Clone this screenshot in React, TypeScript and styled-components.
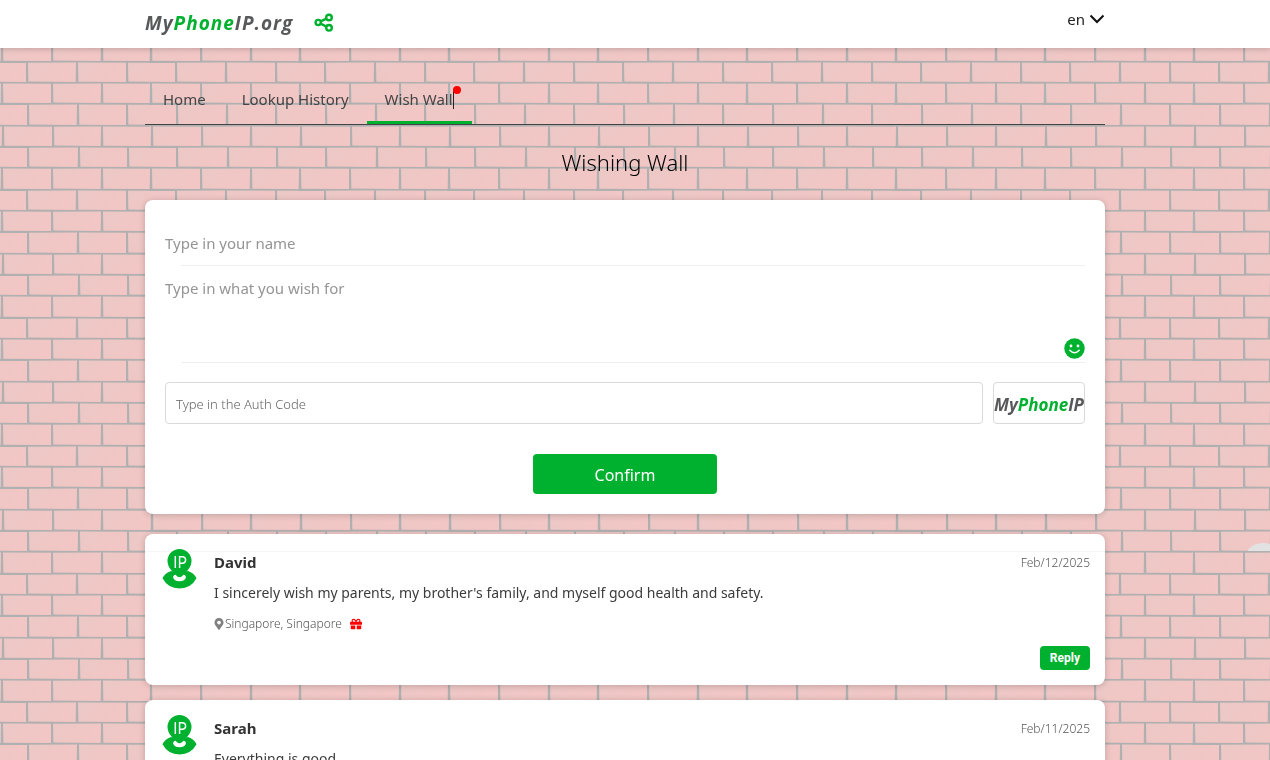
import React from 'react';
import styled, { createGlobalStyle } from 'styled-components';
import { FaGift, FaMapMarkerAlt } from 'react-icons/fa';

const green = '#00b02f';

const GlobalStyle = createGlobalStyle`
  * { box-sizing: border-box; }
  body {
    margin: 0;
    font-family: "Noto Sans", "Open Sans", sans-serif;
    color: #000;
  }
  #root { height: 100vh; overflow-y: auto; scrollbar-width: none; }
  button, input, textarea { font-family: inherit; font-weight: inherit; }
  input::placeholder, textarea::placeholder { color: #959595; opacity: 1; }
`;

const Backdrop = styled.svg`
  position: fixed;
  inset: 0;
  width: 100%;
  height: 100%;
  z-index: -1;
`;

const Header = styled.header`
  height: 48px;
  background: #fff;
  box-shadow: 0 1px 6px rgba(0, 0, 0, 0.2);
`;

const Container = styled.div`
  width: 100%;
  max-width: 960px;
  margin: 0 auto;
`;

const Shell = styled.div`
  padding-right: 20px;
`;

const HeaderBar = styled(Container)`
  display: flex;
  align-items: center;
  height: 46px;
`;

const Logo = styled.a`
  font-family: "Open Sans", "Noto Sans", sans-serif;
  font-size: 19px;
  line-height: 28px;
  font-weight: 700;
  font-style: italic;
  letter-spacing: 1px;
  color: #58595b;
  text-decoration: none;
  em { color: ${green}; }
`;

const IconButton = styled.button`
  display: flex;
  padding: 0;
  border: 0;
  background: none;
  color: ${green};
  cursor: pointer;
`;

const ShareButton = styled(IconButton)`
  margin-left: 21px;
`;

const LanguageButton = styled.button`
  display: flex;
  align-items: center;
  gap: 4px;
  margin-left: auto;
  padding: 0 0 8px;
  border: 0;
  background: none;
  font-size: 15px;
  line-height: 20px;
  color: #222;
`;

const Tabs = styled.nav`
  display: flex;
  margin-top: 28px;
  border-bottom: 1px solid #444;
`;

const Tab = styled.a<{ $active?: boolean }>`
  height: 48px;
  padding: 11px 18px 0;
  font-size: 15px;
  line-height: 24px;
  color: #444;
  text-decoration: none;
  border-bottom: 3px solid ${(p) => (p.$active ? green : 'transparent')};
`;

const TabLabel = styled.span`
  position: relative;
  border-right: 1px solid #222;
`;

const Dot = styled.i`
  position: absolute;
  top: -3px;
  right: -8px;
  width: 8px;
  height: 8px;
  border-radius: 50%;
  background: #f00;
`;

const Title = styled.h1`
  margin: 21px 0 22px;
  font-size: 22px;
  line-height: 32px;
  font-weight: 300;
  text-align: center;
`;

const Card = styled.section`
  background: #fff;
  border-radius: 8px;
  box-shadow: 0 1px 6px rgba(0, 0, 0, 0.2);
`;

const WishForm = styled.form`
  display: flex;
  flex-direction: column;
  padding: 24px 20px 20px;
`;

const Field = styled.label`
  display: flex;
  align-items: flex-end;
`;

const NameInput = styled.input`
  flex: 1;
  height: 41px;
  padding: 0 0 4px;
  border: 0;
  outline: 0;
  font-size: 15px;
`;

const WishInput = styled.textarea`
  flex: 1;
  height: 86px;
  padding: 0;
  border: 0;
  outline: 0;
  resize: none;
  font-size: 15px;
  line-height: 24px;
`;

const Divider = styled.hr`
  width: calc(100% - 16px);
  height: 1px;
  margin: 0 0 10px auto;
  border: 0;
  background: #eee;
`;

const SmileButton = styled(IconButton)`
  margin-bottom: 3px;
`;

const AuthRow = styled.div`
  display: flex;
  gap: 10px;
  margin: 9px 0 30px;
`;

const AuthInput = styled.input`
  flex: 1;
  height: 42px;
  padding: 2px 10px 0;
  border: 1px solid #d9d9d9;
  border-radius: 4px;
  outline: 0;
  font-size: 13px;
  font-weight: 300;
  &::placeholder { color: #666; }
`;

const Captcha = styled.div`
  display: flex;
  align-items: center;
  justify-content: center;
  width: 92px;
  height: 42px;
  padding-top: 2px;
  border: 1px solid #d9d9d9;
  border-radius: 4px;
  font-family: "Open Sans", "Noto Sans", sans-serif;
  font-size: 17px;
  font-weight: 700;
  font-style: italic;
  color: #58595b;
  em { color: ${green}; }
`;

const ConfirmButton = styled.button`
  align-self: center;
  width: 184px;
  height: 40px;
  padding: 2px 0 0;
  border: 0;
  border-radius: 4px;
  background: ${green};
  color: #fff;
  font-size: 16px;
`;

const Wishes = styled.div`
  display: grid;
  gap: 15px;
  margin: 20px 0;
`;

const WishCard = styled(Card)<{ $seam?: boolean }>`
  display: grid;
  grid-template-columns: 35px 1fr;
  column-gap: 17px;
  padding: 14px 15px 15px 17px;
  ${(p) => p.$seam && 'background: linear-gradient(#f5f5f5, #f5f5f5) 0 17px / 100% 1px no-repeat #fff;'}
`;

const WishBody = styled.div`
  display: flex;
  flex-direction: column;
`;

const WishHead = styled.div`
  display: flex;
  justify-content: space-between;
  align-items: center;
`;

const Author = styled.h2`
  margin: 0;
  font-size: 15px;
  line-height: 28px;
  font-weight: 700;
  color: #333;
`;

const Stamp = styled.time`
  font-size: 12px;
  font-weight: 300;
  color: #555;
`;

const Message = styled.p`
  margin: 5px 0;
  font-size: 14px;
  line-height: 24px;
  color: #3c3c3c;
`;

const Place = styled.div`
  display: flex;
  align-items: center;
  font-size: 12px;
  line-height: 28px;
  font-weight: 300;
  color: #555;
  svg { margin-left: -1px; color: #808080; }
  svg:last-child { margin-left: 8px; color: #f00; }
`;

const ReplyButton = styled.button`
  align-self: flex-end;
  height: 24px;
  margin-top: 8px;
  padding: 0 10px;
  border: 0;
  border-radius: 4px;
  background: ${green};
  color: #fff;
  font: 700 12px Roboto, "Liberation Sans", sans-serif;
`;

const TopButton = styled.div`
  position: fixed;
  right: 0;
  bottom: 209px;
  width: 22px;
  height: 8px;
  overflow: hidden;
  svg { display: block; }
`;

const rows = [
  { y: 0, joints: [26, 76, 126] },
  { y: 21, joints: [1, 51, 101] },
  { y: 42, joints: [27, 77, 126] },
  { y: 64, joints: [2, 52, 101] },
  { y: 85, joints: [27, 78, 127] },
  { y: 106, joints: [1, 51, 101] },
  { y: 128, joints: [] },
];

function brickPath(x: number, right: number, y: number, bottom: number, lean: number) {
  return `M${x + 2} ${y + 1.5 + lean}L${right} ${y + 1.8 - lean}L${right - lean} ${bottom}L${x + 2.4} ${bottom - 0.3 - lean}Z`;
}

function Bricks() {
  return (
    <Backdrop aria-hidden="true">
      <defs>
        <linearGradient id="clay" x1="0" y1="0" x2="1" y2="0.4">
          <stop offset="0" stopColor="#ebc9c6" />
          <stop offset="0.5" stopColor="#efc7c5" />
          <stop offset="1" stopColor="#f2c6c5" />
        </linearGradient>
        <pattern id="bricks" width="149" height="128" y="61" patternUnits="userSpaceOnUse">
          <rect width="149" height="128" fill="#b1b0b0" />
          {rows.slice(0, 6).map(({ y, joints }, r) =>
            [joints[2] - 149, ...joints].map((x, i) => {
              const right = i === 3 ? joints[0] + 149 : joints[i];
              return (
                <path key={`${r}-${i}`} d={brickPath(x, right, y, rows[r + 1].y, (r + i) % 2 ? 0.3 : 0)} fill="url(#clay)" />
              );
            }),
          )}
          <path d="M1.500 24V41" stroke="#a8b6b9" />
        </pattern>
      </defs>
      <rect width="100%" height="100%" fill="url(#bricks)" />
    </Backdrop>
  );
}

function Avatar() {
  return (
    <svg width="35" height="41" viewBox="0 0 35 41" aria-hidden="true">
      <path d="M0.500 30.300Q3 25 9 23L17.500 25L26 23Q32 25 34.500 30.300Q29 40.500 17.500 40.500Q6 40.500 0.500 30.300Z" fill={green} />
      <path d="M11 29Q11.500 26.500 13.800 26.500H21.200Q23.500 26.500 24 29Q23 33.300 17.500 33.300Q12 33.300 11 29Z" fill="#fff" />
      <path d="M17.500 1A12 12 0 0 1 29.500 13Q29.500 18 25.500 22.500Q22 26 20 28.300Q17.500 30 15 28.300Q13 26 9.500 22.500Q5.500 18 5.500 13A12 12 0 0 1 17.500 1Z" fill={green} />
      <path d="M13.300 8V20M17.600 20V8.800H20Q23.600 8.800 23.600 12T20 15.200H17.600" fill="none" stroke="#fff" strokeWidth="1.500" />
    </svg>
  );
}

type WishProps = { name: string; date: string; text: string; place: string; seam?: boolean };

function Wish({ name, date, text, place, seam }: WishProps) {
  return (
    <WishCard as="article" $seam={seam}>
      <Avatar />
      <WishBody>
        <WishHead>
          <Author>{name}</Author>
          <Stamp>{date}</Stamp>
        </WishHead>
        <Message>{text}</Message>
        <Place>
          <FaMapMarkerAlt size={12} />
          {place}
          <FaGift size={12} />
        </Place>
        <ReplyButton type="button">Reply</ReplyButton>
      </WishBody>
    </WishCard>
  );
}

export default function App() {
  return (
    <>
      <GlobalStyle />
      <Bricks />
      <Header>
        <Shell>
          <HeaderBar>
            <Logo href="#">My<em>Phone</em>IP.org</Logo>
            <ShareButton type="button" aria-label="Share">
              <svg width="20" height="20" viewBox="0 0 20 20" fill="none" stroke="currentColor" strokeWidth="2.400">
                <circle cx="4.200" cy="9.500" r="2.600" />
                <circle cx="15" cy="4.500" r="2.800" />
                <circle cx="15" cy="14.800" r="2.800" />
                <path d="M6.600 8.400L12.500 5.600M6.600 10.600L12.500 13.600" />
              </svg>
            </ShareButton>
            <LanguageButton type="button">
              en
              <svg width="16" height="10" viewBox="0 0 16 10" fill="none" stroke="#111" strokeWidth="2">
                <path d="M1.500 1.500L8 8L14.500 1.500" />
              </svg>
            </LanguageButton>
          </HeaderBar>
        </Shell>
      </Header>
      <Shell>
        <Container as="main">
          <Tabs>
            <Tab href="#">Home</Tab>
            <Tab href="#">Lookup History</Tab>
            <Tab href="#" $active><TabLabel>Wish Wall<Dot /></TabLabel></Tab>
          </Tabs>
          <Title>Wishing Wall</Title>
          <Card>
            <WishForm>
              <Field><NameInput aria-label="Name" placeholder="Type in your name" /></Field>
              <Divider />
              <Field>
                <WishInput aria-label="Wish" placeholder="Type in what you wish for" />
                <SmileButton type="button" aria-label="Emoji">
                  <svg width="21" height="21" viewBox="0 0 21 21">
                    <circle cx="10.500" cy="10.500" r="10.200" fill={green} />
                    <circle cx="7" cy="8" r="1.400" fill="#fff" />
                    <circle cx="14" cy="8" r="1.400" fill="#fff" />
                    <path d="M5.800 12.300Q10.500 17.300 15.200 12.300" fill="none" stroke="#fff" strokeWidth="1.500" strokeLinecap="round" />
                  </svg>
                </SmileButton>
              </Field>
              <Divider />
              <AuthRow>
                <AuthInput aria-label="Auth code" placeholder="Type in the Auth Code" />
                <Captcha>My<em>Phone</em>IP</Captcha>
              </AuthRow>
              <ConfirmButton type="button">Confirm</ConfirmButton>
            </WishForm>
          </Card>
          <Wishes>
            <Wish seam name="David" date="Feb/12/2025" text="I sincerely wish my parents, my brother's family, and myself good health and safety." place="Singapore, Singapore" />
            <Wish name="Sarah" date="Feb/11/2025" text="Everything is good." place="Singapore, Singapore" />
          </Wishes>
        </Container>
      </Shell>
      <TopButton aria-hidden="true">
        <svg width="22" height="8">
          <circle cx="15" cy="20" r="20" fill="#e2e2e2" />
        </svg>
      </TopButton>
    </>
  );
}
